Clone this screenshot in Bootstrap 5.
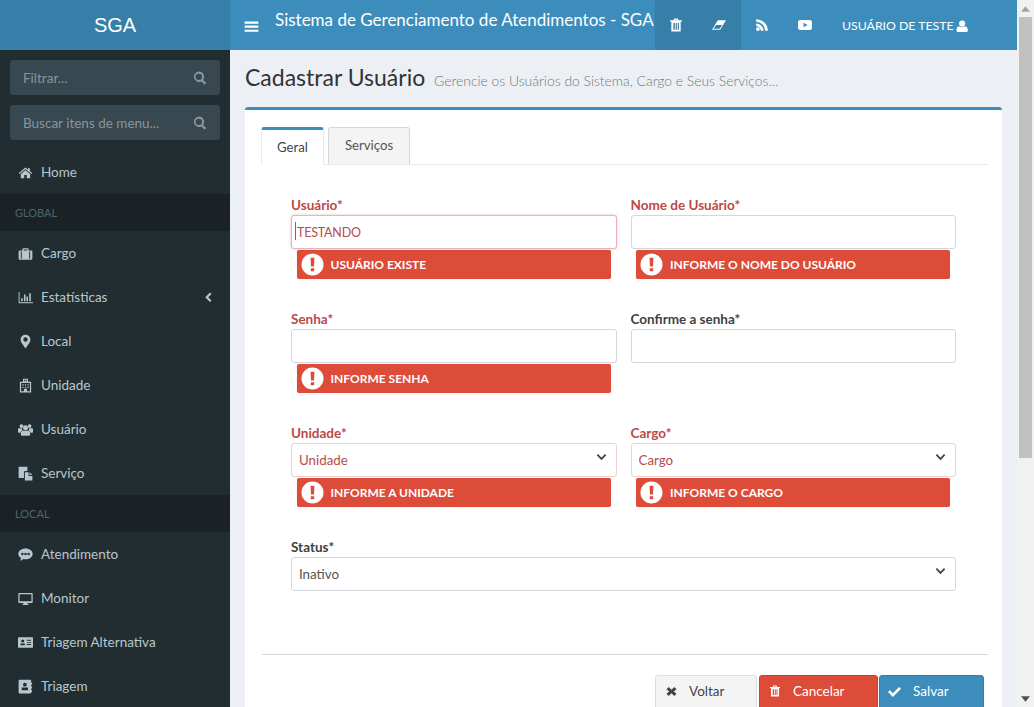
<!DOCTYPE html>
<html lang="pt-br">
<head>
  <meta charset="UTF-8">
  <meta name="viewport" content="width=device-width, initial-scale=1.0">
  <title>SGA - Cadastrar Usuário</title>
  <link href="https://cdn.jsdelivr.net/npm/bootstrap@5.3.0/dist/css/bootstrap.min.css" rel="stylesheet">
  <style>
    html, body { height: 100%; overflow: hidden; }
    body { font-family: "Lato", "Liberation Sans", sans-serif; font-size: 13.5px; color: #333; background: #ecf0f5; }
    .ico { width: 1em; height: 1em; fill: currentColor; fill-rule: evenodd; flex: none; }

    .app-shell { height: 707px; }
    .app-main { width: 1017px; }

    /* fake browser scrollbar */
    .scroll-fake { width: 17px; background: #f1f1f1; }
    .scroll-arrow { height: 17px; }
    .scroll-arrow svg { width: 9px; height: 6px; fill: #a3a3a3; }
    .scroll-arrow.down svg { fill: #505050; }
    .scroll-thumb { height: 441px; margin: 0 2px; background: #c1c1c1; }

    /* header */
    .app-top { height: 50px; background: #3c8dbc; color: #fff; }
    .brand { width: 230px; background: #367fa9; font-family: "Liberation Sans", sans-serif; font-size: 20px; }
    .burger { width: 45px; padding: 2px 2px 0 0; font-size: 15px; }
    .sys-title { font-size: 17px; width: 380px; padding-bottom: 10px; white-space: nowrap; }
    .top-icon { width: 43px; padding-right: 2px; font-size: 14px; }
    .top-icon.on { background: #367fa9; }
    .top-user { padding: 2px 0 0 15px; font-size: 12.3px; white-space: nowrap; gap: 2px; }

    /* sidebar */
    .side { width: 230px; background: #222d32; color: #b8c7ce; overflow: hidden; }
    .side-search { height: 35px; margin: 10px 10px 0; padding: 1px 13px 0 13px; background: #374850; color: #8b9599; border-radius: 3px; }
    .side-search .ico { font-size: 14px; }
    .side-menu { margin-top: 10px; }
    .side-head { height: 37px; padding: 1px 0 0 15px; background: #1a2226; color: #4b646f; font-size: 11px; }
    .side-link { height: 44px; padding: 0 0 0 18px; color: #b8c7ce; text-decoration: none; }
    .side-link .ico { width: 15px; height: 15px; margin-right: 8px; }
    .side-link .ico.arrow { width: 12px; height: 12px; margin: 0 16px 0 auto; }

    /* content */
    .page { overflow: hidden; }
    .page-head { height: 57px; padding: 12px 15px 0; }
    .page-head h1 { font-size: 23px; font-weight: 400; margin: 0; line-height: 30px; color: #333; }
    .page-head small { font-size: 13.9px; font-weight: 300; color: #777; margin-left: 3px; }
    .cad-box { margin: 0 15px; padding: 17px 14px 0 16px; background: #fff; border-top: 3px solid #3c8dbc; border-radius: 3px 3px 0 0; }
    .cad-tabs { border-bottom: 1px solid #e6e9ee; gap: 4px; height: 38px; }
    .cad-tabs .nav-link { height: 38px; padding: 0 16px; line-height: 34px; font-size: 13.2px; color: #555; border-radius: 3px 3px 0 0; }
    .cad-tabs .nav-link.active { border: 1px solid #e6e9ee; border-top: 3px solid #3c8dbc; border-bottom-color: #fff; color: #444; line-height: 34px; padding: 0 15px; }
    .cad-tabs .nav-link.idle { height: 37px; background: #f4f4f4; border: 1px solid #d2d6de; border-bottom: 0; }
    .cad-form { padding: 30px 32px 0 30px; }
    .cad-form .row { --bs-gutter-x: 14px; height: 114px; }
    .cad-form label { display: block; font-weight: 700; font-size: 13.5px; height: 20px; line-height: 20px; color: #3f3f3f; }
    .cad-form label.erro { color: #b94a48; }
    .campo { height: 34px; border: 1px solid #d2d6de; border-radius: 3px; font-size: 13.3px; padding: 0 7px; color: #555; box-shadow: none; }
    .campo.erro { color: #b94a48; border-color: #eccfd2; }
    .campo.foco { border-color: #e8b4bb; box-shadow: 0 0 3px rgba(185, 74, 72, .35); padding-left: 5px; font-size: 12.5px; letter-spacing: -.2px; }
    select.campo {
      padding-top: 2px;
      background-image: url("data:image/svg+xml,%3csvg xmlns='http://www.w3.org/2000/svg' viewBox='0 0 12 8'%3e%3cpath fill='none' stroke='%23444' stroke-width='2' d='M1.500 1.500 6 6l4.500-4.500'/%3e%3c/svg%3e");
      background-position: right 9px top 9px;
      background-size: 11px 8px;
    }
    .caret-fake { position: absolute; left: 4px; top: 7px; width: 1px; height: 18px; background: #b94a48; }
    .aviso { height: 29px; margin: 1px 6px 0 5.5px; padding: 0 0 0 4px; background: #dd4b39; color: #fff; font-weight: 700; font-size: 12px; border-radius: 2px; box-shadow: 0 0 1px #e8b4bb; gap: 7px; }
    .aviso .ico { font-size: 23px; }

    .cad-foot { margin-left: 1px; padding: 20px 4px 0 0; margin-top: 3px; border-top: 1px solid #d2d6de; gap: 2px; }
    .cad-btn { height: 40px; padding: 0 0 8px 9px; font-size: 13.5px; border-radius: 3px 3px 0 0; text-align: left; gap: 12px; }
    .cad-btn .ico { width: 12px; height: 12px; }
    .cad-btn.voltar { width: 102px; padding-left: 10px; background: #f4f4f4; border: 1px solid #ddd; color: #444; }
    .cad-btn.voltar .ico { width: 11px; height: 11px; }
    .cad-btn.cancelar { width: 119px; margin-right: -1px; background: #dd4b39; border: 1px solid #d73925; color: #fff; }
    .cad-btn.salvar { width: 105px; padding-left: 8px; background: #3c8dbc; border: 1px solid #367fa9; color: #fff; }
    .cad-btn.salvar .ico { width: 13px; height: 13px; }
  </style>
</head>
<body>

<svg width="0" height="0" class="d-block">
  <symbol id="i-home" viewBox="0 0 24 24"><path d="M12 4 1 13l1.300 1.500L12 6.600l9.700 7.900 1.300-1.500-4-3.300V5h-3v2.700zM4.500 14.500V21H10v-5h4v5h5.500v-6.500L12 8.400z"/></symbol>
  <symbol id="i-case" viewBox="0 0 24 24"><path d="M9 3.500h6A2 2 0 0 1 17 5.500V7h4a2 2 0 0 1 2 2v11a2 2 0 0 1-2 2H3a2 2 0 0 1-2-2V9a2 2 0 0 1 2-2h4V5.500a2 2 0 0 1 2-2zM9 7h6V5.500H9zM4.500 8.500v12H6v-12zm13.500 0v12h1.500v-12z"/></symbol>
  <symbol id="i-chart" viewBox="0 0 24 24"><path d="M1 3h1.500v16.500H24V21H1zM5 13h2.500v5H5zM9.500 7H12v11H9.500zM13.500 10.500H16V18h-2.500zM18 5h2.500v13H18z"/></symbol>
  <symbol id="i-pin" viewBox="0 0 24 24"><path d="M12 1a7.800 7.800 0 0 0-7.800 7.800c0 2.400.7 3.700 1.700 5.700L12 23l6.100-8.500c1-2 1.700-3.300 1.700-5.700A7.800 7.800 0 0 0 12 1zm0 4.300a3.500 3.500 0 1 1 0 7 3.500 3.500 0 0 1 0-7z"/></symbol>
  <symbol id="i-hosp" viewBox="0 0 24 24"><path d="M8 1h8v5h5v17H3V6h5zm2 1.500V5.500h1V4.500h2v1h1V2.500h-1v1h-2v-1zM5 8v13h4.500v-4h5v4H19V8zm2 2h2v2H7zm4 0h2v2h-2zm4 0h2v2h-2zm-8 4h2v2H7zm4 0h2v2h-2zm4 0h2v2h-2z"/></symbol>
  <symbol id="i-users" viewBox="0 0 24 24"><circle cx="5.500" cy="6.500" r="3"/><circle cx="18.500" cy="6.500" r="3"/><circle cx="12" cy="9" r="4"/><path d="M0 11.500c0-1 1-1.500 2-1.500h4a5 5 0 0 0 1.500 3.500c-2 .5-3.500 2-3.700 3.500H1c-.6 0-1-.4-1-1zM24 11.500c0-1-1-1.500-2-1.500h-4a5 5 0 0 1-1.500 3.500c2 .5 3.500 2 3.700 3.500H23c.6 0 1-.4 1-1zM8 14h8c2 0 3.500 1.500 3.500 3.500V20c0 1-1 2-2 2h-11c-1 0-2-1-2-2v-2.500C4.500 15.500 6 14 8 14z"/></symbol>
  <symbol id="i-files" viewBox="0 0 24 24"><path d="M1 1h14v7h-3.500a2 2 0 0 0-2 2v9H1zM11 10h6v6h6v7H11zM18.500 10l4.500 4.500h-4.500z"/></symbol>
  <symbol id="i-chat" viewBox="0 0 24 24"><path d="M12 2.500c6.400 0 11.500 3.800 11.500 8.500S18.400 19.500 12 19.500c-1 0-2-.1-3-.3-1.500 1.300-3.500 2.300-6 2.800 1-1.300 1.700-2.800 1.900-4.500C2.200 16 .5 13.700.5 11 .5 6.300 5.600 2.500 12 2.500zM7 9a2 2 0 1 0 0 4 2 2 0 0 0 0-4zm5 0a2 2 0 1 0 0 4 2 2 0 0 0 0-4zm5 0a2 2 0 1 0 0 4 2 2 0 0 0 0-4z"/></symbol>
  <symbol id="i-desk" viewBox="0 0 24 24"><path d="M2 3h20a1.500 1.500 0 0 1 1.500 1.500v13A1.500 1.500 0 0 1 22 19h-7l.5 2H17v1.200H7V21h1.500l.5-2H2A1.500 1.500 0 0 1 .5 17.500v-13A1.500 1.500 0 0 1 2 3zm.5 2v11.500h19V5z"/></symbol>
  <symbol id="i-card" viewBox="0 0 24 24"><path d="M1.500 3.500h21A1.500 1.500 0 0 1 24 5v14a1.500 1.500 0 0 1-1.500 1.500h-21A1.500 1.500 0 0 1 0 19V5a1.500 1.500 0 0 1 1.500-1.500zM7.500 7a2.500 2.500 0 1 0 0 5 2.500 2.500 0 0 0 0-5zM4 13.500V16.500h7v-3zM14 7.500v1.500h7V7.500zm0 3.500v1.500h7V11zm0 3.500V16h7v-1.500z"/></symbol>
  <symbol id="i-book" viewBox="0 0 24 24"><path d="M2.500 1h17A1.500 1.500 0 0 1 21 2.500V6h1.500v3H21v3h1.500v3H21v3h1.500v3H21v.5a1.500 1.500 0 0 1-1.500 1.500h-17A1.500 1.500 0 0 1 1 21.500v-19A1.500 1.500 0 0 1 2.500 1zM11 6a3 3 0 1 0 0 6 3 3 0 0 0 0-6zM6 13.500V18h10v-4.500z"/></symbol>
  <symbol id="i-trash" viewBox="0 0 24 24"><path d="M9 1h6l1.500 3H22v2.500h-2V23H4V6.500H2V4h5.500zM10 4h4l-.5-1h-3zM7.500 8.500V20H10V8.500zm4 0V20h2V8.500zm3.500 0V20h2V8.500z"/></symbol>
  <symbol id="i-eraser" viewBox="0 0 24 24"><path d="M10 4h14L14 20H0zM2.800 18.500h10.400l4.200-6.500H7z"/></symbol>
  <symbol id="i-rss" viewBox="0 0 24 24"><circle cx="5" cy="19" r="3.200"/><path d="M2 9.500a12.500 12.500 0 0 1 12.500 12.500H10A8 8 0 0 0 2 14zM2 2a20 20 0 0 1 20 20h-4.500A15.500 15.500 0 0 0 2 6.500z"/></symbol>
  <symbol id="i-yt" viewBox="0 0 24 24"><path d="M4 3.500h16A4 4 0 0 1 24 7.500v9a4 4 0 0 1-4 4H4a4 4 0 0 1-4-4v-9a4 4 0 0 1 4-4zM9.500 8v8l7-4z"/></symbol>
  <symbol id="i-user" viewBox="0 0 24 24"><circle cx="12" cy="7" r="6"/><path d="M6.500 12c1.500 1.300 3.400 2 5.500 2s4-.7 5.500-2c3 .3 5.500 3 5.500 6.500V21c0 1.500-1 2.500-2.500 2.500h-17C2 23.500 1 22.500 1 21v-2.500C1 15 3.500 12.300 6.500 12z"/></symbol>
  <symbol id="i-bars" viewBox="0 0 24 24"><path d="M1 4h22v3.500H1zM1 10.500h22V14H1zM1 17h22v3.500H1z"/></symbol>
  <symbol id="i-search" viewBox="0 0 24 24"><path d="M10 1a9 9 0 0 1 7.300 14.300l5.400 5.400-2.800 2.800-5.400-5.400A9 9 0 1 1 10 1zm0 3.500a5.500 5.500 0 1 0 0 11 5.500 5.500 0 0 0 0-11z"/></symbol>
  <symbol id="i-angle" viewBox="0 0 24 24"><path d="M16 3l3 3-6.500 6.500L19 19l-3 3L6.500 12.500z"/></symbol>
  <symbol id="i-alert" viewBox="0 0 24 24"><path d="M12 .5a11.500 11.500 0 1 1 0 23 11.500 11.500 0 0 1 0-23zM10 5l.4 9h3.200L14 5zm.2 11v3h3.600v-3z"/></symbol>
  <symbol id="i-x" viewBox="0 0 24 24"><path d="M6 2l6 6 6-6 5 5-6 5 6 5-5 5-6-6-6 6-5-5 6-5-6-5z"/></symbol>
  <symbol id="i-check" viewBox="0 0 24 24"><path d="M3.500 9.500 9 15 20.500 3.500 24 7 9 22 0 13z"/></symbol>
  <symbol id="i-up" viewBox="0 0 10 6"><path d="M5 0l5 6H0z"/></symbol>
  <symbol id="i-down" viewBox="0 0 10 6"><path d="M0 0h10L5 6z"/></symbol>
</svg>

<div class="app-shell d-flex">
  <div class="app-main d-flex flex-column">

    <!-- Top -->
    <header class="app-top d-flex flex-shrink-0">
      <div class="brand d-flex align-items-center justify-content-center">SGA</div>
      <div class="burger d-flex align-items-center justify-content-center"><svg class="ico"><use href="#i-bars"/></svg></div>
      <div class="sys-title d-flex align-items-center">Sistema de Gerenciamento de Atendimentos - SGA</div>
      <div class="top-icon on d-flex align-items-center justify-content-center"><svg class="ico"><use href="#i-trash"/></svg></div>
      <div class="top-icon on d-flex align-items-center justify-content-center"><svg class="ico"><use href="#i-eraser"/></svg></div>
      <div class="top-icon d-flex align-items-center justify-content-center"><svg class="ico"><use href="#i-rss"/></svg></div>
      <div class="top-icon d-flex align-items-center justify-content-center"><svg class="ico"><use href="#i-yt"/></svg></div>
      <div class="top-user d-flex align-items-center">USUÁRIO DE TESTE <svg class="ico"><use href="#i-user"/></svg></div>
    </header>

    <div class="d-flex flex-grow-1 overflow-hidden">
      <!-- Sidebar -->
      <aside class="side flex-shrink-0">
        <div class="side-search d-flex align-items-center justify-content-between">Filtrar... <svg class="ico"><use href="#i-search"/></svg></div>
        <div class="side-search d-flex align-items-center justify-content-between">Buscar itens de menu... <svg class="ico"><use href="#i-search"/></svg></div>
        <div class="side-menu">
          <a class="side-link d-flex align-items-center" href="#"><svg class="ico"><use href="#i-home"/></svg>Home</a>
          <div class="side-head d-flex align-items-center">GLOBAL</div>
          <a class="side-link d-flex align-items-center" href="#"><svg class="ico"><use href="#i-case"/></svg>Cargo</a>
          <a class="side-link d-flex align-items-center" href="#"><svg class="ico"><use href="#i-chart"/></svg>Estatísticas<svg class="ico arrow"><use href="#i-angle"/></svg></a>
          <a class="side-link d-flex align-items-center" href="#"><svg class="ico"><use href="#i-pin"/></svg>Local</a>
          <a class="side-link d-flex align-items-center" href="#"><svg class="ico"><use href="#i-hosp"/></svg>Unidade</a>
          <a class="side-link d-flex align-items-center" href="#"><svg class="ico"><use href="#i-users"/></svg>Usuário</a>
          <a class="side-link d-flex align-items-center" href="#"><svg class="ico"><use href="#i-files"/></svg>Serviço</a>
          <div class="side-head d-flex align-items-center">LOCAL</div>
          <a class="side-link d-flex align-items-center" href="#"><svg class="ico"><use href="#i-chat"/></svg>Atendimento</a>
          <a class="side-link d-flex align-items-center" href="#"><svg class="ico"><use href="#i-desk"/></svg>Monitor</a>
          <a class="side-link d-flex align-items-center" href="#"><svg class="ico"><use href="#i-card"/></svg>Triagem Alternativa</a>
          <a class="side-link d-flex align-items-center" href="#"><svg class="ico"><use href="#i-book"/></svg>Triagem</a>
        </div>
      </aside>

      <!-- Content -->
      <main class="page flex-grow-1">
        <div class="page-head">
          <h1>Cadastrar Usuário <small>Gerencie os Usuários do Sistema, Cargo e Seus Serviços...</small></h1>
        </div>
        <div class="cad-box">
          <ul class="nav nav-tabs cad-tabs">
            <li class="nav-item"><a class="nav-link active" href="#">Geral</a></li>
            <li class="nav-item"><a class="nav-link idle" href="#">Serviços</a></li>
          </ul>

          <form class="cad-form">
            <div class="row">
              <div class="col-6">
                <label class="erro">Usuário*</label>
                <div class="position-relative">
                  <input type="text" class="form-control campo erro foco" value="TESTANDO">
                  <span class="caret-fake"></span>
                </div>
                <div class="aviso d-flex align-items-center"><svg class="ico"><use href="#i-alert"/></svg>USUÁRIO EXISTE</div>
              </div>
              <div class="col-6">
                <label class="erro">Nome de Usuário*</label>
                <input type="text" class="form-control campo">
                <div class="aviso d-flex align-items-center"><svg class="ico"><use href="#i-alert"/></svg>INFORME O NOME DO USUÁRIO</div>
              </div>
            </div>
            <div class="row">
              <div class="col-6">
                <label class="erro">Senha*</label>
                <input type="password" class="form-control campo">
                <div class="aviso d-flex align-items-center"><svg class="ico"><use href="#i-alert"/></svg>INFORME SENHA</div>
              </div>
              <div class="col-6">
                <label>Confirme a senha*</label>
                <input type="password" class="form-control campo">
              </div>
            </div>
            <div class="row">
              <div class="col-6">
                <label class="erro">Unidade*</label>
                <select class="form-select campo erro"><option>Unidade</option></select>
                <div class="aviso d-flex align-items-center"><svg class="ico"><use href="#i-alert"/></svg>INFORME A UNIDADE</div>
              </div>
              <div class="col-6">
                <label class="erro">Cargo*</label>
                <select class="form-select campo erro"><option>Cargo</option></select>
                <div class="aviso d-flex align-items-center"><svg class="ico"><use href="#i-alert"/></svg>INFORME O CARGO</div>
              </div>
            </div>
            <div class="row">
              <div class="col-12">
                <label>Status*</label>
                <select class="form-select campo"><option>Inativo</option></select>
              </div>
            </div>
          </form>

          <div class="cad-foot d-flex justify-content-end">
            <button type="button" class="btn cad-btn voltar d-flex align-items-center"><svg class="ico"><use href="#i-x"/></svg>Voltar</button>
            <button type="button" class="btn cad-btn cancelar d-flex align-items-center"><svg class="ico"><use href="#i-trash"/></svg>Cancelar</button>
            <button type="button" class="btn cad-btn salvar d-flex align-items-center"><svg class="ico"><use href="#i-check"/></svg>Salvar</button>
          </div>
        </div>
      </main>
    </div>
  </div>

  <!-- Scrollbar -->
  <div class="scroll-fake d-flex flex-column flex-shrink-0">
    <div class="scroll-arrow d-flex align-items-center justify-content-center"><svg><use href="#i-up"/></svg></div>
    <div class="scroll-thumb"></div>
    <div class="scroll-arrow down d-flex align-items-center justify-content-center mt-auto"><svg><use href="#i-down"/></svg></div>
  </div>
</div>

<script src="https://cdn.jsdelivr.net/npm/bootstrap@5.3.0/dist/js/bootstrap.bundle.min.js"></script>
</body>
</html>
